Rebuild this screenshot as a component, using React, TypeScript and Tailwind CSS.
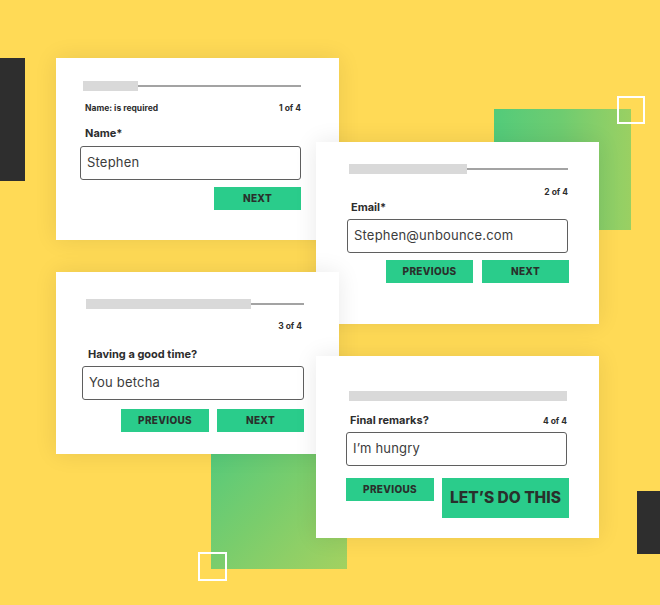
import type { ReactNode } from "react";

const FONT = "font-['Inter','Liberation_Sans',sans-serif]";

function Progress({ fill, full }: { fill: number; full?: boolean }) {
  return (
    <div className="flex items-center h-[10px]">
      <div className="h-[10px] bg-[#d9d9d9]" style={{ width: fill }} />
      {!full && <div className="flex-1 h-[1.5px] bg-[#a3a3a3]" />}
    </div>
  );
}

function Input({ value }: { value: string }) {
  return (
    <div className="h-[34px] border-[1.5px] border-[#5f5f5f] rounded-[3px] flex items-center px-[6px] text-[13px] text-[#3c3c3c] tracking-[0.2px]">
      {value}
    </div>
  );
}

function Btn({ children, w, h = 23, big }: { children: ReactNode; w: number; h?: number; big?: boolean }) {
  return (
    <div
      className={`bg-[#2acc8b] flex items-center justify-center font-extrabold text-[#29302c] ${big ? "text-[15.5px]" : "text-[10px] tracking-[0.3px]"}`}
      style={{ width: w, height: h }}
    >
      {children}
    </div>
  );
}

function Card({ left, top, children }: { left: number; top: number; children: ReactNode }) {
  return (
    <div
      className="absolute w-[283px] h-[182px] bg-white shadow-[0_0_22px_rgba(0,0,0,0.09)]"
      style={{ left, top }}
    >
      {children}
    </div>
  );
}

export default function App() {
  return (
    <div className={`relative w-[660px] h-[605px] overflow-hidden bg-[#ffda56] ${FONT}`}>
      {/* decorative blocks */}
      <div className="absolute left-0 top-[58px] w-[25px] h-[123px] bg-[#2e2e2e]" />
      <div className="absolute left-[637px] top-[491px] w-[23px] h-[63px] bg-[#2e2e2e]" />
      <div className="absolute left-[494px] top-[109px] w-[137px] h-[121px] bg-gradient-to-r from-[#52cb7a] via-[#6fcc70] to-[#9ad062]" />
      <div className="absolute left-[211px] top-[430px] w-[136px] h-[139px] bg-gradient-to-br from-[#4cc97c] via-[#7acd6c] to-[#a2d160]" />
      <div className="absolute left-[617px] top-[96px] w-[28px] h-[28px] border-[2.5px] border-white" />

      {/* card 1 */}
      <Card left={56} top={58}>
        <div className="ml-[24px] w-[221px]">
          <div className="mt-[23px] ml-[3px]">
            <Progress fill={55} />
          </div>
          <div className="mt-[12px] ml-[5px] flex justify-between text-[8.5px] font-bold text-[#2d2d2d] leading-[10px]">
            <span>Name: is required</span>
            <span>1 of 4</span>
          </div>
          <div className="mt-[14px] ml-[5px] text-[11px] font-bold text-[#2d2d2d] leading-[13px]">Name*</div>
          <div className="mt-[6px]">
            <Input value="Stephen" />
          </div>
          <div className="mt-[7px] flex justify-end">
            <Btn w={87}>NEXT</Btn>
          </div>
        </div>
      </Card>

      {/* card 2 */}
      <Card left={316} top={142}>
        <div className="ml-[31px] w-[221px]">
          <div className="mt-[22px] ml-[2px]">
            <Progress fill={118} />
          </div>
          <div className="mt-[13px] flex justify-end text-[8.5px] font-bold text-[#2d2d2d] leading-[10px]">
            <span>2 of 4</span>
          </div>
          <div className="mt-[4px] ml-[4px] text-[11px] font-bold text-[#2d2d2d] leading-[13px]">Email*</div>
          <div className="mt-[5px]">
            <Input value="Stephen@unbounce.com" />
          </div>
          <div className="mt-[7px] flex justify-end gap-[9px] mr-[-1px]">
            <Btn w={87}>PREVIOUS</Btn>
            <Btn w={87}>NEXT</Btn>
          </div>
        </div>
      </Card>

      {/* card 3 */}
      <Card left={56} top={272}>
        <div className="ml-[26px] w-[222px]">
          <div className="mt-[27px] ml-[4px]">
            <Progress fill={165} />
          </div>
          <div className="mt-[12px] mr-[2px] flex justify-end text-[8.5px] font-bold text-[#2d2d2d] leading-[10px]">
            <span>3 of 4</span>
          </div>
          <div className="mt-[17px] ml-[6px] text-[11px] font-bold text-[#2d2d2d] leading-[13px]">Having a good time?</div>
          <div className="mt-[5px]">
            <Input value="You betcha" />
          </div>
          <div className="mt-[9px] flex justify-end gap-[8px]">
            <Btn w={88}>PREVIOUS</Btn>
            <Btn w={87}>NEXT</Btn>
          </div>
        </div>
      </Card>

      {/* card 4 */}
      <Card left={316} top={356}>
        <div className="ml-[30px] w-[221px]">
          <div className="mt-[35px] ml-[3px]">
            <Progress fill={218} full />
          </div>
          <div className="mt-[13px] ml-[4px] flex justify-between items-center text-[#2d2d2d]">
            <span className="text-[11px] font-bold leading-[13px]">Final remarks?</span>
            <span className="text-[8.5px] font-bold leading-[10px]">4 of 4</span>
          </div>
          <div className="mt-[5px]">
            <Input value="I’m hungry" />
          </div>
          <div className="mt-[12px] flex justify-between items-start mr-[-2px]">
            <Btn w={88}>PREVIOUS</Btn>
            <Btn w={127} h={40} big>
              LET’S DO THIS
            </Btn>
          </div>
        </div>
      </Card>

      <div className="absolute left-[198px] top-[552px] w-[29px] h-[29px] border-[2.5px] border-white" />
    </div>
  );
}
